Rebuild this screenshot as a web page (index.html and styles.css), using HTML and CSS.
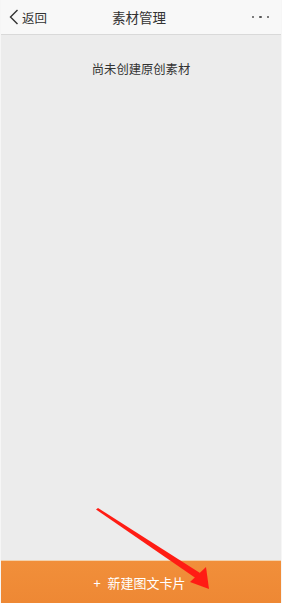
FILE: index.html
```html
<!DOCTYPE html>
<html lang="zh-CN">
<head>
    <meta charset="UTF-8">
    <meta name="viewport" content="width=device-width, initial-scale=1.0">
    <title>素材管理</title>
    <link rel="stylesheet" href="styles.css">
</head>
<body>

    <div class="page">
        <header class="topbar">
            <a class="back" href="#">
                <svg class="back-icon" width="10" height="16" viewBox="0 0 10 16">
                    <path d="M8.5 1 L1.5 8 L8.5 15" fill="none" stroke="#333" stroke-width="1.4"/>
                </svg>
                <span>返回</span>
            </a>
            <h1 class="title">素材管理</h1>
            <div class="more">
                <span class="dot"></span>
                <span class="dot"></span>
                <span class="dot"></span>
            </div>
        </header>

        <main class="content">
            <p class="empty">尚未创建原创素材</p>
        </main>

        <footer class="action">
            <button type="button" class="new-btn"><span class="plus">+</span>新建图文卡片</button>
        </footer>

        <!-- hint arrow drawn over the page -->
        <svg class="arrow" width="282" height="603" viewBox="0 0 282 603">
            <polygon points="95,509.5 97,508 199,573 196,579" fill="#ff1c14"/>
            <polygon points="189,582 205,567 208,589" fill="#ff1c14"/>
        </svg>
    </div>

</body>
</html>
```

FILE: styles.css
```css
* {
    box-sizing: border-box;
}

body {
    margin: 0;
    padding: 0;
    font-family: "Noto Sans CJK SC", "Noto Sans", sans-serif;
    background-color: #ececec;
}

.page {
    position: relative;
    display: flex;
    flex-direction: column;
    height: 603px;
    border-left: 1px solid #f6f6f6;
    border-right: 1px solid #f6f6f6;
}

.topbar {
    display: flex;
    align-items: center;
    justify-content: space-between;
    height: 35px;
    padding: 0 12px 0 8px;
    background-color: #f8f8f8;
    border-bottom: 1px solid #d9d9d9;
}

.back {
    display: flex;
    align-items: center;
    gap: 3px;
    width: 60px;
    color: #333;
    font-size: 12.5px;
    text-decoration: none;
}

.title {
    margin: 0;
    font-size: 13.5px;
    font-weight: normal;
    color: #333;
}

.more {
    display: flex;
    justify-content: flex-end;
    gap: 5px;
    width: 60px;
}

.dot {
    width: 2.5px;
    height: 2.5px;
    border-radius: 50%;
    background-color: #555;
}

.content {
    flex: 1;
    text-align: center;
}

.empty {
    margin: 25px 0 0;
    font-size: 12.3px;
    color: #333;
}

.action {
    height: 43px;
    border-top: 1px solid #f3d2ae;
    background: linear-gradient(#f18f3a, #ee8834);
}

.new-btn {
    width: 100%;
    height: 100%;
    padding: 0;
    border: none;
    background: none;
    color: #fff;
    font-family: inherit;
    font-size: 13px;
    cursor: pointer;
}

.plus {
    margin-right: 7px;
    margin-left: -3px;
}

.arrow {
    position: absolute;
    left: 0;
    top: 0;
    pointer-events: none;
}
```
